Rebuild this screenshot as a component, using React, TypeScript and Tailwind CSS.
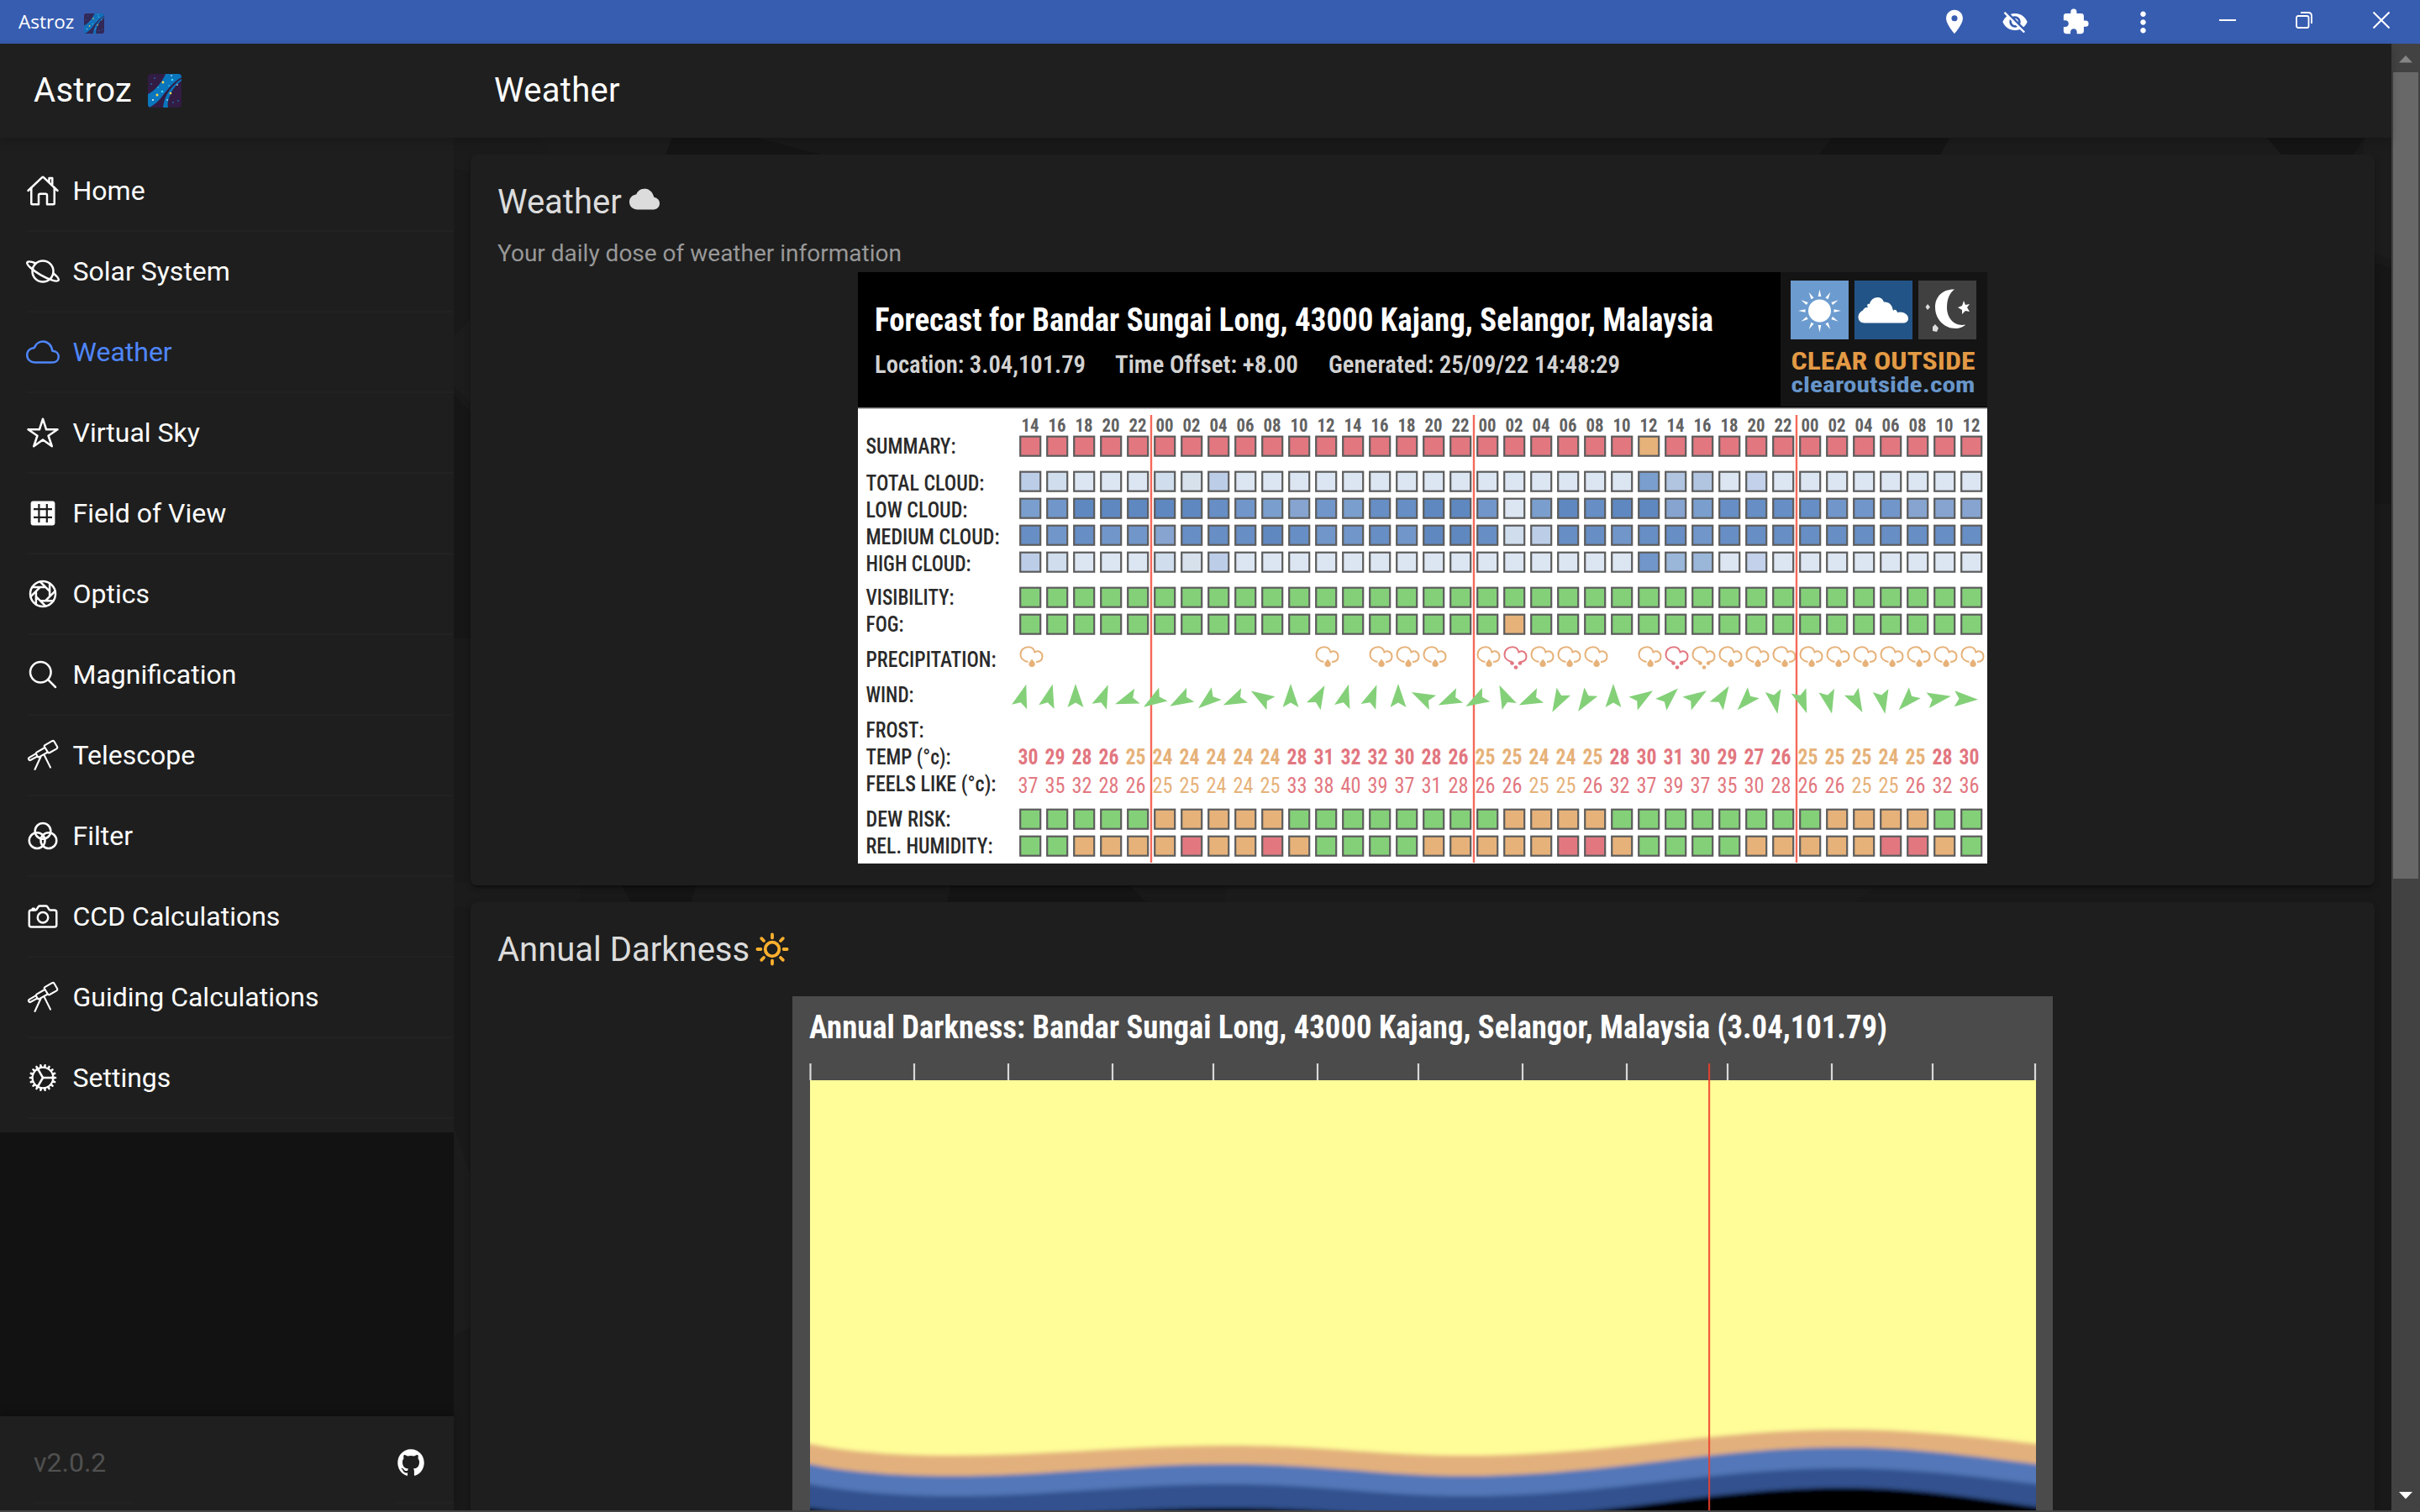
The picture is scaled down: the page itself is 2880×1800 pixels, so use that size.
import React from "react";
import {
  IoHomeOutline,
  IoPlanetOutline,
  IoCloudOutline,
  IoStarOutline,
  IoApertureOutline,
  IoSearchOutline,
  IoColorFilterOutline,
  IoCameraOutline,
  IoCogOutline,
  IoCloud,
  IoLogoGithub,
} from "react-icons/io5";
import { MdLocationOn, MdVisibilityOff, MdExtension, MdMoreVert } from "react-icons/md";

function MilkyWay({ size }: { size: number }) {
  return (
    <svg width={size} height={size} viewBox="0 0 40 40">
      <defs>
        <clipPath id={`sky${size}`}>
          <rect width="40" height="40" rx="4" />
        </clipPath>
      </defs>
      <g clipPath={`url(#sky${size})`}>
        <rect width="40" height="40" fill="#321c43" />
        <path d="M0 24C10 19 17 9 21 0H40V6C30 11 22 20 17 27C12 33 7 37 2 40H0Z" fill="#0a76bd" />
        <path d="M40 8C33 14 30 17 27 24C24 30 23 36 24 40H18C19 31 22 24 27 18C31 13 35 9 40 5Z" fill="#0a76bd" />
        <path d="M40 5C30 10 22 22 17 28" stroke="#321c43" strokeWidth="1.6" fill="none" />
        <g fill="#ffd84a">
          <circle cx="18" cy="10" r="1.4" />
          <circle cx="11" cy="25" r="1.5" />
          <circle cx="27" cy="23" r="1.3" />
        </g>
        <g fill="#3fd2f5">
          <circle cx="29" cy="7" r="1.3" />
          <circle cx="17" cy="21" r="1.3" />
          <circle cx="12" cy="16" r=".8" />
          <circle cx="25" cy="14" r=".8" />
        </g>
        <g fill="#fff">
          <circle cx="6" cy="31" r="1" />
          <circle cx="28" cy="2" r=".8" />
          <circle cx="35" cy="13" r=".8" />
          <circle cx="23" cy="31" r=".8" />
        </g>
        <g fill="#1c6fb0">
          <circle cx="8" cy="5" r=".9" />
          <circle cx="4" cy="12" r=".9" />
          <circle cx="36" cy="32" r=".9" />
          <circle cx="30" cy="34" r=".9" />
        </g>
      </g>
    </svg>
  );
}

function Telescope() {
  return (
    <svg width="40" height="40" viewBox="0 0 40 40" fill="none" stroke="currentColor" strokeWidth="2.1" strokeLinejoin="round" strokeLinecap="round">
      <path d="M22.4 8.2L31 3.2Q32.6 2.4 33.5 3.8L37 9.8Q37.8 11.4 36.4 12.3L28.2 17Q26.8 17.8 25.9 16.4L21.9 10Q21.2 9 22.4 8.2Z" />
      <path d="M22.3 11L12.6 16.6Q11.4 17.4 12 18.6L13.7 21.7Q14.4 22.9 15.7 22.2L25.8 16.5" />
      <path d="M11.8 18.2L3.8 22.8Q2.4 23.7 3.2 25.1Q4 26.6 5.5 25.8L13.6 21.4" />
      <path d="M17.4 22L10.5 37M21.6 19.8L29 34.6" />
    </svg>
  );
}

function FieldGrid() {
  return (
    <svg width="40" height="40" viewBox="0 0 40 40">
      <rect x="5.6" y="5.6" width="28.8" height="28.8" rx="3" fill="#fff" />
      <path d="M15.4 9V31M24.8 9V31M9 15.2H31M9 24.8H31" stroke="#1e1e1e" strokeWidth="2.2" />
    </svg>
  );
}

const nav = [
  { label: "Home", icon: <IoHomeOutline size={40} /> },
  { label: "Solar System", icon: <IoPlanetOutline size={40} /> },
  { label: "Weather", icon: <IoCloudOutline size={40} />, active: true },
  { label: "Virtual Sky", icon: <IoStarOutline size={40} /> },
  { label: "Field of View", icon: <FieldGrid /> },
  { label: "Optics", icon: <IoApertureOutline size={40} /> },
  { label: "Magnification", icon: <IoSearchOutline size={40} /> },
  { label: "Telescope", icon: <Telescope /> },
  { label: "Filter", icon: <IoColorFilterOutline size={40} /> },
  { label: "CCD Calculations", icon: <IoCameraOutline size={40} /> },
  { label: "Guiding Calculations", icon: <Telescope /> },
  { label: "Settings", icon: <IoCogOutline size={40} /> },
];

const RED = "#e27780";
const GREEN = "#84d079";
const ORANGE = "#e6b27a";
const PALE = "#dce6f2";

const hours = [14, 16, 18, 20, 22, ...Array.from({ length: 31 }, (_, i) => (i * 2) % 24)];

const palette: Record<string, string> = {
  R: RED, G: GREEN, O: ORANGE, L: PALE,
  a: "#cfdded", b: "#bccde8", c: "#b1c5e1", d: "#c3d1ea",
  e: "#9ab6d9", f: "#86a4cf", g: "#7a9ecd", h: "#7196ca",
  i: "#678ec5", j: "#5f88c0", k: "#d6e1ec",
};

const boxRows: [number, string][] = [
  [518, "RRRRRRRRRRRRRRRRRRRRRRRORRRRRRRRRRRR"],
  [560, "baLLLakbLLLLLLLLLLLLLLLgccLdLLLLLLLL"],
  [592, "ghjjjjjihgfhgiijjhLgjijjfgiiiihhhfff"],
  [624, "ihihhfiiijihhihjjiabiihiihiiiiiiiiii"],
  [656, "baLLLakbLLLLLLLLLLLLLLLheeLdLLLLLLLL"],
  [698, "GGGGGGGGGGGGGGGGGGGGGGGGGGGGGGGGGGGG"],
  [730, "GGGGGGGGGGGGGGGGGGOGGGGGGGGGGGGGGGGG"],
  [962, "GGGGGOOOOOGGGGGGGGOOOOGGGGGGGGOOOOGG"],
  [994, "GGOOOOROOROGGGGOOOOORROGGGGOOOOORROG"],
];

const rowLabels: [string, number, number][] = [
  ["SUMMARY:", 540, 107],
  ["TOTAL CLOUD:", 584, 141],
  ["LOW CLOUD:", 616, 121],
  ["MEDIUM CLOUD:", 648, 159],
  ["HIGH CLOUD:", 680, 125],
  ["VISIBILITY:", 720, 105],
  ["FOG:", 752, 45],
  ["PRECIPITATION:", 794, 155],
  ["WIND:", 836, 57],
  ["FROST:", 878, 69],
  ["TEMP (°c):", 910, 101],
  ["FEELS LIKE (°c):", 942, 155],
  ["DEW RISK:", 984, 101],
  ["REL. HUMIDITY:", 1016, 151],
];

const temps = [30, 29, 28, 26, 25, 24, 24, 24, 24, 24, 28, 31, 32, 32, 30, 28, 26, 25, 25, 24, 24, 25, 28, 30, 31, 30, 29, 27, 26, 25, 25, 25, 24, 25, 28, 30];
const feels = [37, 35, 32, 28, 26, 25, 25, 24, 24, 25, 33, 38, 40, 39, 37, 31, 28, 26, 26, 25, 25, 26, 32, 37, 39, 37, 35, 30, 28, 26, 26, 25, 25, 26, 32, 36];
const wind = [17, 15, 0, 22, 250, 237, 241, 231, 245, 302, 0, 28, 16, 21, 0, 296, 245, 240, 335, 245, 209, 213, 0, 57, 46, 57, 32, 223, 169, 160, 167, 152, 169, 223, 80, 92];
const rain = "1..........1.111.12111.1231111111111";

/** Text squeezed to a fixed width, as in the forecast's condensed lettering. */
function T({ x, y, w, size, weight = 500, fill, anchor = "start", children }: {
  x: number; y: number; w: number; size: number; weight?: number; fill: string; anchor?: "start" | "middle"; children: React.ReactNode;
}) {
  return (
    <text x={x} y={y} textLength={w} lengthAdjust="spacingAndGlyphs" fontSize={size} fontWeight={weight} fontStretch="condensed" fill={fill} textAnchor={anchor}>
      {children}
    </text>
  );
}

function Forecast() {
  return (
    <svg width="1344" height="704" viewBox="1021 324 1344 704" fontFamily="Roboto, sans-serif" className="block overflow-visible">
      <rect x="1021" y="324" width="1344" height="704" fill="#fff" />
      <rect x="1021" y="324" width="1344" height="161" fill="#000" />
      <rect x="1021" y="485" width="1344" height="1.5" fill="#777" />
      <T x={1041} y={394} w={998} size={38} weight={700} fill="#fff">Forecast for Bandar Sungai Long, 43000 Kajang, Selangor, Malaysia</T>
      <T x={1041} y={444} w={251} size={30} weight={600} fill="#d2d2d2">Location: 3.04,101.79</T>
      <T x={1327} y={444} w={218} size={30} weight={600} fill="#d2d2d2">Time Offset: +8.00</T>
      <T x={1581} y={444} w={347} size={30} weight={600} fill="#d2d2d2">Generated: 25/09/22 14:48:29</T>

      <rect x="2119" y="324" width="246" height="160" fill="#141414" />
      <rect x="2131" y="334" width="69" height="70" fill="#6c9bcf" />
      <rect x="2207" y="334" width="69" height="70" fill="#235487" />
      <rect x="2283" y="334" width="69" height="70" fill="#404040" />
      <circle cx="2165.5" cy="370" r="13.5" fill="#fff" />
      {Array.from({ length: 12 }, (_, i) => (
        <path key={i} d="M2165.5 344.5L2167.3 353H2163.7Z" fill="#fff" transform={`rotate(${i * 30} 2165.5 370)`} />
      ))}
      <path d="M2219 384.5C2210 384.5 2209 373 2217 369.500C2219 365 2222 366 2223 366C2221 363 2223 361 2225 362C2227 353 2239 351 2242 359.500C2248 359 2252 363 2253 370C2255 367 2258 370 2258 372C2264 370 2271 374 2271 379C2271 383 2268 384.5 2265 384.5Z" fill="#fff" />
      <path d="M2326 344.500C2312 344 2303 353 2303 366C2303 380 2314 391 2327 391C2332 391 2337 389 2339 386.500C2326 389 2317 379 2317 366C2317 356 2320 349 2326 344.500Z" fill="#fff" />
      <path d="M2337 358l2 5 5-1-3 4 3 5-5-1-4 4v-5l-5-3 5-2z" fill="#fff" />
      <path d="M2294 362l3 3.500-3 3.500-2.500-3.500zM2303 386l4 4.500-2 4.500-5-1v-5z" fill="#ddd" />
      <T x={2131.5} y={440} w={219} size={30} weight={700} fill="#e39a45">CLEAR OUTSIDE</T>
      <T x={2131.5} y={467} w={219} size={26} weight={700} fill="#6795c9">clearoutside.com</T>

      {rowLabels.map(([label, y, w]) => (
        <T key={label} x={1030.5} y={y} w={w} size={25} fill="#2a2a2a">{label}</T>
      ))}
      {hours.map((h, i) => (
        <T key={i} x={1226 + i * 32} y={513.5} w={21} size={22} weight={700} fill="#626262" anchor="middle">{String(h).padStart(2, "0")}</T>
      ))}
      {boxRows.map(([y, cells]) =>
        cells.split("").map((c, i) => (
          <rect key={`${y}-${i}`} x={1214.2 + i * 32} y={y + 1.7} width="24" height="23" fill={palette[c]} stroke="#5c5c5c" strokeWidth="2.2" />
        ))
      )}
      {rain.split("").map((r, i) =>
        r === "." ? null : (
          <g key={i} transform={`translate(${1213 + i * 32} 769)`}>
            <path
              d="M10.500 19C5 18 1.5 14.500 1.5 10.500C1.5 5 5.500 1.300 11 1.300C15 1.300 17.500 3.500 18.500 7.500C23 4.500 27.500 8 27.500 12.500C27.500 16.500 24.500 18.800 20 19"
              fill="none" stroke={r === "2" ? RED : ORANGE} strokeWidth="2"
            />
            {r === "1" ? (
              <path d="M15 15.500C18 19 18.800 20 18.800 21.500A3.600 3.300 0 0 1 11.400 21.500C11.400 20 12.500 19 15 15.500Z" fill={ORANGE} />
            ) : (
              <g fill={r === "2" ? RED : ORANGE}>
                <circle cx="10.500" cy="20.500" r="2.300" />
                <circle cx="20" cy="20.500" r="2.300" />
                <circle cx="15" cy="25.500" r="2.300" />
              </g>
            )}
          </g>
        )
      )}
      {temps.map((v, i) => (
        <T key={i} x={1223.5 + i * 32} y={910} w={24} size={25} weight={700} fill={v > 25 ? RED : ORANGE} anchor="middle">{v}</T>
      ))}
      {feels.map((v, i) => (
        <T key={i} x={1223.5 + i * 32} y={944} w={24} size={25} weight={400} fill={v > 25 ? RED : ORANGE} anchor="middle">{v}</T>
      ))}
      {[1370, 1754, 2138].map((x) => (
        <rect key={x} x={x - 1.2} y="494" width="2.400" height="533" fill="#f4695a" />
      ))}
      {wind.map((a, i) => (
        <path key={i} d="M0 -18L9.500 10L0 4.500L-9.500 10Z" fill={GREEN} transform={`translate(${1216 + i * 32} 832) rotate(${a})`} />
      ))}
    </svg>
  );
}

function Darkness() {
  return (
    <svg width="1500" height="612" viewBox="943 1186 1500 612" fontFamily="Roboto, sans-serif" className="block overflow-visible">
      <defs>
        <clipPath id="plot">
          <rect x="964" y="1286" width="1459" height="512" />
        </clipPath>
        <filter id="soft" x="-5%" y="-20%" width="110%" height="140%">
          <feGaussianBlur stdDeviation="1.5 2.5" />
        </filter>
      </defs>
      <rect x="943" y="1186" width="1500" height="612" fill="#4b4b4b" />
      <T x={963} y={1236} w={1283} size={38} weight={700} fill="#fff">Annual Darkness: Bandar Sungai Long, 43000 Kajang, Selangor, Malaysia (3.04,101.79)</T>
      {[964.5, 1088, 1200, 1324, 1444, 1568, 1688, 1812, 1936, 2056, 2180, 2300, 2422].map((x) => (
        <rect key={x} x={x - 1.1} y="1266" width="2.200" height="20" fill="#d8d8d8" />
      ))}
      <g clipPath="url(#plot)">
        <rect x="964" y="1286" width="1460" height="512" fill="#fffd98" />
        <g filter="url(#soft)">
          <path d="M940 1711L964 1719C1010 1729 1070 1733 1135 1733C1250 1733 1340 1721 1460 1721S1640 1733 1744 1733C1920 1733 2030 1702 2196 1702C2280 1702 2360 1712 2424 1719L2450 1724V1900H940Z" fill="#e2b07c" />
          <path d="M940 1734L964 1743C1010 1753 1070 1757 1135 1757C1250 1757 1340 1743 1460 1743S1640 1757 1744 1757C1920 1757 2030 1723 2196 1723C2280 1723 2360 1735 2424 1743L2450 1748V1900H940Z" fill="#5277b8" />
          <path d="M940 1758L964 1767C1010 1776 1070 1781 1135 1781C1250 1781 1340 1767 1460 1767S1640 1781 1744 1781C1920 1781 2030 1748 2196 1748C2280 1748 2360 1759 2424 1767L2450 1772V1900H940Z" fill="#31518e" />
          <path d="M940 1786L964 1795C1010 1802 1070 1807 1135 1807C1250 1807 1340 1795 1460 1795S1640 1807 1744 1807C1920 1807 2030 1771 2196 1771C2280 1771 2360 1785 2424 1794L2450 1798V1900H940Z" fill="#000" />
        </g>
      </g>
      <rect x="2033" y="1266" width="2.200" height="532" fill="#f0402c" fillOpacity=".85" />
    </svg>
  );
}

const cardClass =
  "rounded-lg bg-[#1e1e1e] shadow-[0_6px_2px_-4px_rgba(0,0,0,0.2),0_4px_4px_rgba(0,0,0,0.14),0_2px_10px_rgba(0,0,0,0.12)]";

export default function App() {
  return (
    <div className="flex h-[1800px] w-[2880px] flex-col overflow-hidden bg-[#191919] font-[Roboto,sans-serif] text-white">
      <div className="flex h-[52px] shrink-0 items-center bg-[#375db1]">
        <span className="ml-[22px] mt-px font-['Open_Sans',sans-serif] text-[22.5px] leading-none">Astroz</span>
        <div className="ml-3 mt-1 opacity-80">
          <MilkyWay size={24} />
        </div>
        <div className="ml-auto flex items-center">
          <MdLocationOn size={34} className="mr-[39px]" />
          <MdVisibilityOff size={32} className="mr-[39px]" />
          <MdExtension size={34} className="mr-[44px]" />
          <MdMoreVert size={39} className="mr-[71px]" />
          <svg width="20" height="20" viewBox="0 0 20 20" className="mb-1 mr-[71px]" stroke="#fff" strokeWidth="2">
            <path d="M0 10H20" />
          </svg>
          <svg width="20" height="20" viewBox="0 0 20 20" className="mb-1 mr-[72px]" stroke="#fff" strokeWidth="1.8" fill="none">
            <rect x="1" y="5" width="14.500" height="14" rx="2" />
            <path d="M6 1H15Q19 1 19 5V14" />
          </svg>
          <svg width="20" height="20" viewBox="0 0 20 20" className="mb-1 mr-[36px]" stroke="#fff" strokeWidth="2">
            <path d="M0.500 0.500L19.500 19.500M19.500 0.500L0.500 19.500" />
          </svg>
        </div>
      </div>

      <div className="flex h-[1746px] shrink-0">
        <div className="flex w-[2846px] flex-col">
          <header className="relative z-10 flex h-28 shrink-0 items-center bg-[#1f1f1f] text-[40px] font-[450] tracking-[0.3px] shadow-[0_4px_10px_rgba(0,0,0,0.2)]">
            <div className="flex w-[588px] items-center pl-10">
              <span>Astroz</span>
              <span className="ml-[19px]">
                <MilkyWay size={40} />
              </span>
            </div>
            <h1>Weather</h1>
          </header>

          <div className="flex min-h-0 flex-1">
            <aside className="flex w-[540px] shrink-0 flex-col bg-[#121212]">
              <nav className="bg-[#1e1e1e] py-4">
                {nav.map((n) => (
                  <div key={n.label} className={n.active ? "pl-8 text-[#4f86fb]" : "pl-8"}>
                    <div className="flex h-24 items-center border-b-2 border-[#222222]">
                      <span className="-ml-px">{n.icon}</span>
                      <span className="ml-[15.5px] text-[32px] leading-none">{n.label}</span>
                    </div>
                  </div>
                ))}
              </nav>
              <footer className="mt-auto flex h-28 items-start justify-between bg-[#1f1f1f] pl-10 pt-2 shadow-[0_-4px_10px_rgba(0,0,0,0.2)]">
                <span className="flex h-24 w-[118px] items-center border-b-2 border-[#222222] text-[32px] text-[#505050]">v2.0.2</span>
                <span className="flex h-24 w-[70px] items-center border-b-2 border-[#222222]">
                  <IoLogoGithub size={36} className="ml-px" />
                </span>
              </footer>
            </aside>

            <main className="relative flex min-w-0 flex-1 flex-col gap-5 overflow-hidden pl-5 pr-5 pt-5">
              <svg className="absolute left-0 top-0" width="2306" height="1634" viewBox="540 164 2306 1634">
                <path d="M540 164H639L660 186L560 206L540 200Z" fill="#1b1b1b" />
                <path d="M639 164H800L790 190H662Z" fill="#1c1c1c" />
                <path d="M800 164H900L1000 190H790ZM2180 164H2320L2306 190H2160ZM2698 164H2814L2796 190H2720Z" fill="#151515" />
                <path d="M2320 164H2698L2720 190H2306ZM2814 164H2846V310L2800 290Z" fill="#1c1c1c" />
                <path d="M540 400L560 380V480L540 460ZM540 1340L560 1400V1580L540 1590Z" fill="#1c1c1c" />
                <path d="M2820 310L2846 320V600H2820ZM540 470V760H560V490Z" fill="#161616" />
                <path d="M738 1050H830L820 1080H754ZM1132 1050H1340L1370 1080H1126Z" fill="#151515" />
                <path d="M540 1050H690V1080H540ZM1460 1050H2240L2200 1080H1456Z" fill="#1b1b1b" />
              </svg>
              <section className={`relative h-[870px] shrink-0 ${cardClass}`}>
                <div className="flex h-[98px] items-center pl-8 pt-4 text-[40px] leading-none text-[#dcdcdc]">
                  <h2>Weather</h2>
                  <IoCloud size={36} className="mb-2 ml-[9px]" />
                </div>
                <p className="mb-0.5 flex h-10 items-center pl-8 text-[28px] leading-none text-[#989898]">Your daily dose of weather information</p>
                <div className="flex justify-center">
                  <Forecast />
                </div>
              </section>
              <section className={`relative h-[760px] shrink-0 ${cardClass}`}>
                <div className="flex h-[112px] items-center pl-8 text-[40px] leading-none text-[#dcdcdc]">
                  <h2 className="pt-0.5">Annual Darkness</h2>
                  <svg width="40" height="40" viewBox="-20 -20 40 40" className="ml-[7px]" stroke="#ffb02e" strokeWidth="3.800" strokeLinecap="round" fill="none">
                    <circle r="8.300" />
                    <path d="M0 -17.600V-13.600M0 17.600V13.600M17.600 0H13.600M-17.600 0H-13.600M12.800 -12.800L10 -10M-12.800 -12.800L-10 -10M12.800 12.800L10 10M-12.800 12.800L-10 10" />
                  </svg>
                </div>
                <div className="flex justify-center">
                  <Darkness />
                </div>
              </section>
            </main>
          </div>
        </div>

        <div className="flex w-[34px] shrink-0 flex-col items-center bg-[#424242]">
          <svg width="34" height="34" viewBox="0 0 34 34" className="shrink-0">
            <path d="M17 14L25 22.500H9Z" fill="#858585" />
          </svg>
          <div className="h-[960px] w-[30px] shrink-0 bg-[#686868]" />
          <svg width="34" height="34" viewBox="0 0 34 34" className="mt-auto shrink-0">
            <path d="M17 20.500L25 12H9Z" fill="#ffffff" />
          </svg>
        </div>
      </div>
      <div className="h-0.5 shrink-0 bg-[#444444]" />
    </div>
  );
}
